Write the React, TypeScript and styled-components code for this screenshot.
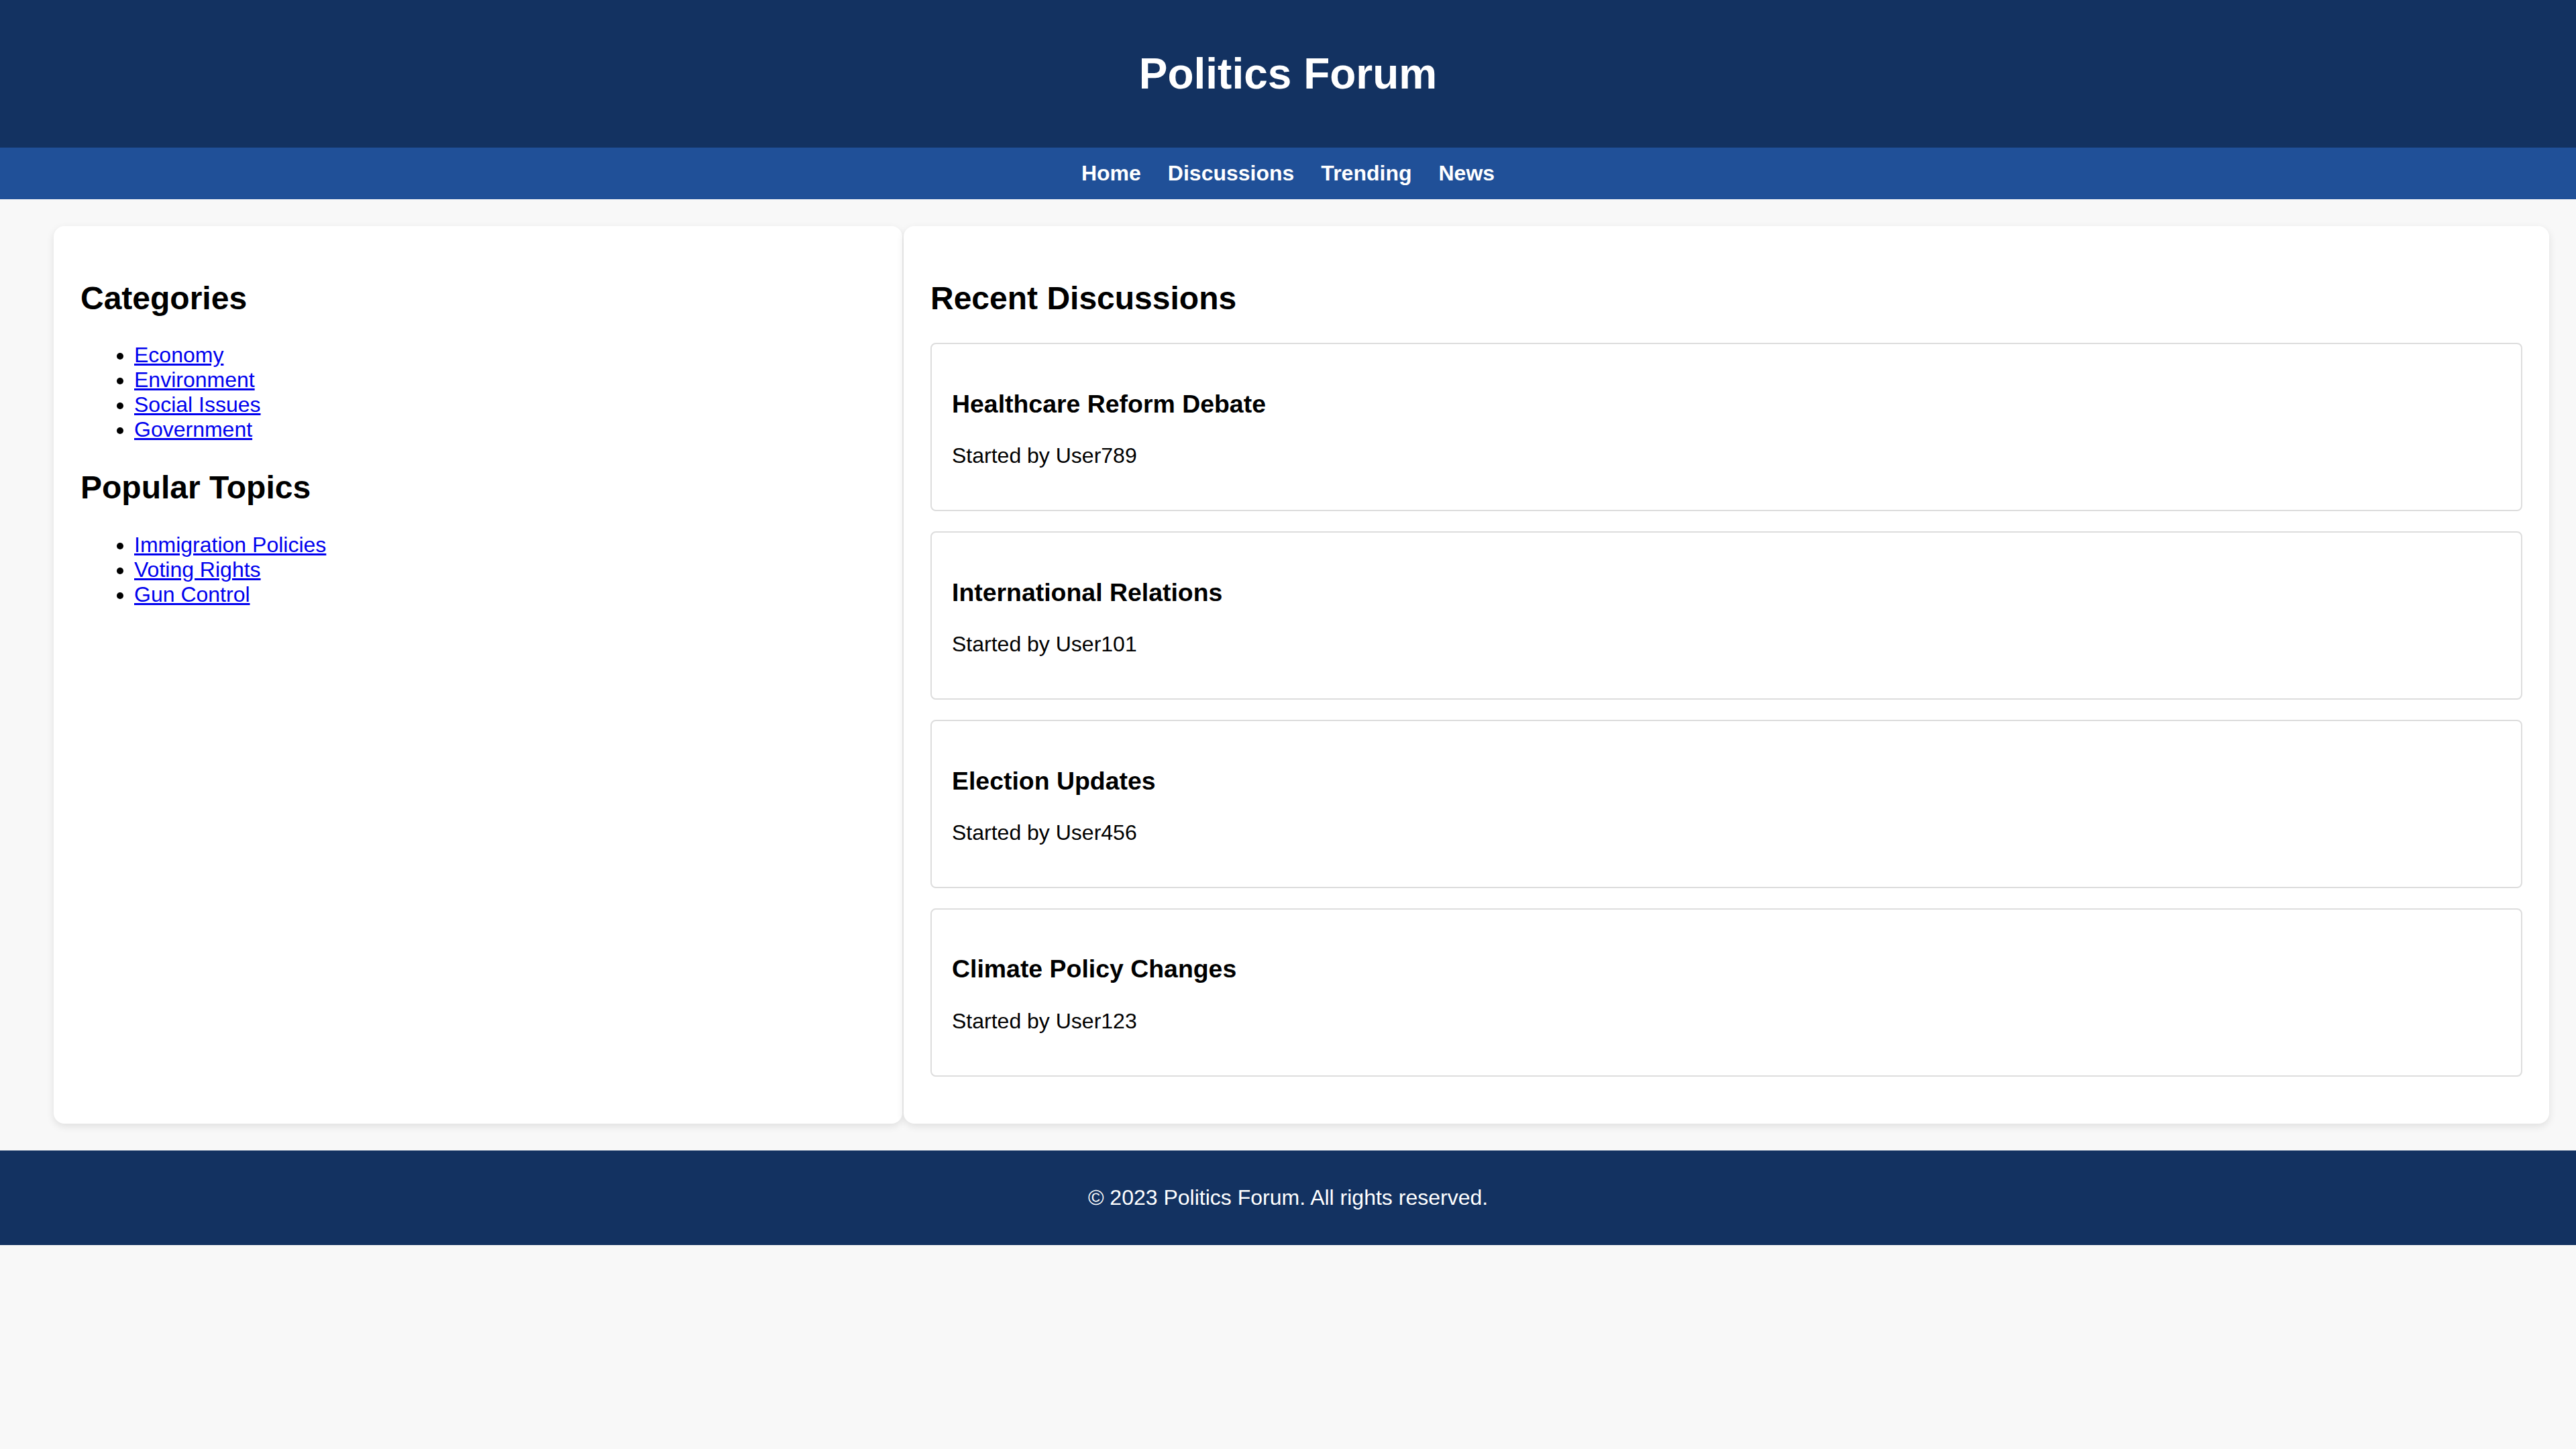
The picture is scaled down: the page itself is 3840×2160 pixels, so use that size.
import React from "react";
import styled, { createGlobalStyle } from "styled-components";

const GlobalStyle = createGlobalStyle`
  html, body {
    margin: 0;
    padding: 0;
    background: #f8f8f8;
    color: #000;
    font-family: "Liberation Sans", Arial, Helvetica, sans-serif;
    font-size: 32px;
  }
`;

const Header = styled.header`
  background: #133261;
  color: #fff;
  text-align: center;
  padding: 30px;
`;

const Title = styled.h1`
  margin: 42.88px 0;
  font-size: 64px;
  font-weight: bold;
  line-height: normal;
`;

const Nav = styled.nav`
  background: #205098;
  padding: 20px;
  display: flex;
  justify-content: center;
`;

const NavLink = styled.a`
  color: #fff;
  text-decoration: none;
  font-weight: bold;
  font-size: 32px;
  margin: 0 20px;
  line-height: normal;
`;

const Main = styled.main`
  display: grid;
  grid-template-columns: 1265px 1fr;
  column-gap: 2px;
  align-items: stretch;
  padding: 40px 40px 40px 80px;
`;

const Panel = styled.section`
  background: #fff;
  border-radius: 16px;
  box-shadow: 0 4px 12px rgba(0, 0, 0, 0.1);
  padding: 40px;
  display: flow-root;
`;

const SectionTitle = styled.h2`
  font-size: 48px;
  font-weight: bold;
  margin: 39.84px 0;
  line-height: normal;
`;

const LinkList = styled.ul`
  margin: 32px 0;
  padding-left: 80px;
  list-style: disc;
`;

const LinkItem = styled.li`
  font-size: 32px;
  line-height: normal;
`;

const TopicLink = styled.a`
  color: #0000ee;
  text-decoration: underline;
`;

const Card = styled.article`
  border: 2px solid #dddddd;
  border-radius: 8px;
  padding: 30px;
  margin-bottom: 30px;
  display: flow-root;
`;

const CardTitle = styled.h3`
  font-size: 37.44px;
  font-weight: bold;
  margin: 37.44px 0;
  line-height: normal;
`;

const CardMeta = styled.p`
  font-size: 32px;
  margin: 32px 0;
  line-height: normal;
`;

const Footer = styled.footer`
  background: #133261;
  color: #fff;
  text-align: center;
  padding: 20px;
`;

const FooterText = styled.p`
  margin: 32px 0;
  font-size: 32px;
  line-height: normal;
`;

const categories = ["Economy", "Environment", "Social Issues", "Government"];
const topics = ["Immigration Policies", "Voting Rights", "Gun Control"];
const discussions = [
  { title: "Healthcare Reform Debate", user: "User789" },
  { title: "International Relations", user: "User101" },
  { title: "Election Updates", user: "User456" },
  { title: "Climate Policy Changes", user: "User123" },
];

export default function App() {
  return (
    <>
      <GlobalStyle />
      <Header>
        <Title>Politics Forum</Title>
      </Header>
      <Nav>
        {["Home", "Discussions", "Trending", "News"].map((l) => (
          <NavLink key={l} href="#">
            {l}
          </NavLink>
        ))}
      </Nav>
      <Main>
        <Panel>
          <SectionTitle>Categories</SectionTitle>
          <LinkList>
            {categories.map((c) => (
              <LinkItem key={c}>
                <TopicLink href="#">{c}</TopicLink>
              </LinkItem>
            ))}
          </LinkList>
          <SectionTitle>Popular Topics</SectionTitle>
          <LinkList>
            {topics.map((t) => (
              <LinkItem key={t}>
                <TopicLink href="#">{t}</TopicLink>
              </LinkItem>
            ))}
          </LinkList>
        </Panel>
        <Panel>
          <SectionTitle>Recent Discussions</SectionTitle>
          {discussions.map((d) => (
            <Card key={d.title}>
              <CardTitle>{d.title}</CardTitle>
              <CardMeta>Started by {d.user}</CardMeta>
            </Card>
          ))}
        </Panel>
      </Main>
      <Footer>
        <FooterText>© 2023 Politics Forum. All rights reserved.</FooterText>
      </Footer>
    </>
  );
}
